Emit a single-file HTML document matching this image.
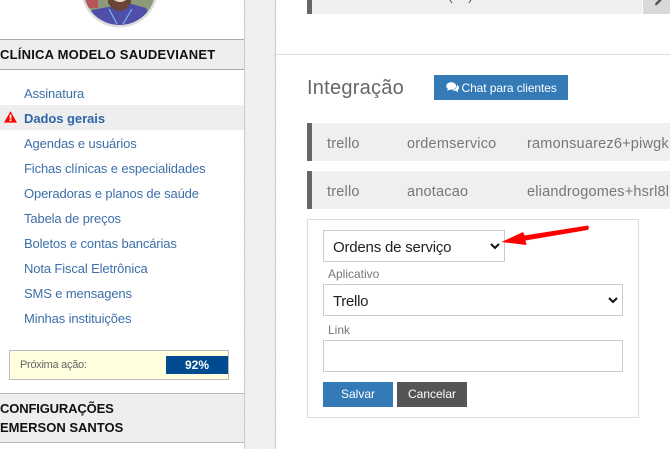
<!DOCTYPE html>
<html lang="pt">
<head>
<meta charset="utf-8">
<title>Integração</title>
<style>
html,body{margin:0;padding:0;background:#fff}
body{width:670px;height:449px;position:relative;overflow:hidden;font-family:"Liberation Sans",Arial,sans-serif}
.a{position:absolute}
.t{position:absolute;white-space:nowrap;line-height:20px;height:20px}
.m{left:24px;font-size:13px;color:#3d6fa8;letter-spacing:-.13px}
.r{font-size:14.5px;color:#777;letter-spacing:.2px}
.h{font-size:13px;font-weight:bold;color:#111}
</style>
</head>
<body>
<!-- texture strip -->
<div class="a" style="left:244px;top:0;width:32px;height:449px;box-sizing:border-box;border-left:1px solid #ccc;border-right:1px solid #ccc;background:repeating-linear-gradient(45deg,#f1f1f1 0 2px,#eeeeee 2px 4px)"></div>

<!-- avatar -->
<svg class="a" style="left:76px;top:0" width="88" height="30" viewBox="0 0 88 30">
<defs><clipPath id="c"><circle cx="43.5" cy="-11" r="36"/></clipPath></defs>
<circle cx="43.5" cy="-11" r="38.5" fill="#ddd"/>
<g clip-path="url(#c)">
<rect x="0" y="0" width="88" height="30" fill="#8f9a78"/>
<rect x="0" y="0" width="22" height="8" fill="#b5565a"/>
<path d="M8 28 L16 10 L32 7 L56 4 L70 8 L80 28 Z" fill="#4f4ea8"/>
<path d="M32 0 H55 V3 Q50 11 44 11 Q37 11 32 3 Z" fill="#6a4434"/>
<path d="M38 0 Q44 4 50 0 Z" fill="#e8d8cc"/>
<path d="M33 9 L41 24 M56 9 L47 24" stroke="#7cc0e6" stroke-width="1.1" fill="none"/>
</g>
</svg>

<!-- sidebar header -->
<div class="a" style="left:0;top:39px;width:244px;height:31px;box-sizing:border-box;background:#eee;border-top:1px solid #aaa;border-bottom:1px solid #aaa"></div>
<div class="t h" style="left:0;top:45px;letter-spacing:.22px">CLÍNICA MODELO SAUDEVIANET</div>

<!-- menu -->
<div class="a" style="left:0;top:105px;width:244px;height:25px;background:#eee"></div>
<svg class="a" style="left:4px;top:111px" width="13" height="12" viewBox="0 0 13 12">
<path d="M6.5 0.3 L12.9 11.6 H0.1 Z" fill="#f00"/>
<rect x="5.6" y="3.6" width="1.8" height="4" fill="#fff"/><rect x="5.6" y="8.4" width="1.8" height="1.8" fill="#fff"/>
</svg>
<div class="t m" style="top:84px">Assinatura</div>
<div class="t m" style="top:109px;font-weight:bold;color:#2e66a8;letter-spacing:-.05px">Dados gerais</div>
<div class="t m" style="top:134px">Agendas e usuários</div>
<div class="t m" style="top:159px">Fichas clínicas e especialidades</div>
<div class="t m" style="top:184px">Operadoras e planos de saúde</div>
<div class="t m" style="top:209px">Tabela de preços</div>
<div class="t m" style="top:234px">Boletos e contas bancárias</div>
<div class="t m" style="top:259px">Nota Fiscal Eletrônica</div>
<div class="t m" style="top:284px">SMS e mensagens</div>
<div class="t m" style="top:309px">Minhas instituições</div>

<!-- next action -->
<div class="a" style="left:9px;top:350px;width:220px;height:30px;box-sizing:border-box;background:#ffffe0;border:1px solid #bbb"></div>
<div class="t" style="left:20px;top:355px;font-size:11px;color:#666;letter-spacing:-.28px">Próxima ação:</div>
<div class="a" style="left:166px;top:356px;width:62px;height:18px;background:#004a8f"></div>
<div class="t" style="left:166px;top:356px;width:62px;height:18px;line-height:19px;text-align:center;font-size:12px;font-weight:bold;color:#fff">92%</div>

<!-- config -->
<div class="a" style="left:0;top:393px;width:244px;height:50px;box-sizing:border-box;background:#eee;border-top:1px solid #bbb;border-bottom:1px solid #bbb"></div>
<div class="t h" style="left:0;top:399px;letter-spacing:-.15px">CONFIGURAÇÕES</div>
<div class="t h" style="left:0;top:418px">EMERSON SANTOS</div>

<!-- top row -->
<div class="a" style="left:307px;top:0;width:335px;height:14px;background:#efefef"></div>
<div class="a" style="left:307px;top:0;width:5px;height:14px;background:#666"></div>
<div class="t" style="left:328px;top:-15px;font-size:14px;color:#777">Comercial</div>
<div class="t" style="left:448px;top:-15px;font-size:14px;color:#555">(41)</div>
<div class="a" style="left:643px;top:0;width:27px;height:14px;background:#d9d9d9"></div>
<svg class="a" style="left:654px;top:0" width="10" height="6" viewBox="0 0 10 6"><path d="M1 5.5 L1.5 3 L4.5 0 H8 L3 5 Z" fill="#555"/></svg>

<div class="a" style="left:276px;top:54px;width:394px;height:1px;background:#ddd"></div>

<!-- heading -->
<div class="t" style="left:307px;top:78px;font-size:20px;color:#666;letter-spacing:.25px">Integração</div>
<div class="a" style="left:434px;top:75px;width:134px;height:25px;background:#337ab7"></div>
<svg class="a" style="left:446px;top:82px" width="13" height="11" viewBox="0 0 13 11">
<ellipse cx="5.2" cy="4" rx="5" ry="3.8" fill="#fff"/><path d="M2 6.5 L1 9 L5 7 Z" fill="#fff"/>
<path d="M11 2.8 Q13 4 13 5.8 Q13 7.4 11.6 8.2 L12.4 10.4 L9.6 8.8 Q7.6 8.9 6.4 8 Q10.8 7.6 11 2.8 Z" fill="#fff"/>
</svg>
<div class="t" style="left:461.5px;top:78px;font-size:12px;color:#fff;letter-spacing:-.08px">Chat para clientes</div>

<!-- rows -->
<div class="a" style="left:307px;top:123px;width:363px;height:38px;background:#efefef"></div>
<div class="a" style="left:307px;top:123px;width:5px;height:38px;background:#666"></div>
<div class="t r" style="left:327px;top:134px">trello</div>
<div class="t r" style="left:407px;top:134px">ordemservico</div>
<div class="t r" style="left:527px;top:134px">ramonsuarez6+piwgk</div>

<div class="a" style="left:307px;top:171px;width:363px;height:38px;background:#efefef"></div>
<div class="a" style="left:307px;top:171px;width:5px;height:38px;background:#666"></div>
<div class="t r" style="left:327px;top:182px">trello</div>
<div class="t r" style="left:407px;top:182px">anotacao</div>
<div class="t r" style="left:527px;top:182px">eliandrogomes+hsrl8l</div>

<!-- form -->
<div class="a" style="left:307px;top:219px;width:332px;height:199px;box-sizing:border-box;border:1px solid #ddd;background:#fff"></div>
<div class="a" style="left:323px;top:230px;width:182px;height:32px;box-sizing:border-box;border:1px solid #ccc"></div>
<div class="t" style="left:333px;top:238px;font-size:15px;color:#222;letter-spacing:-.2px">Ordens de serviço</div>
<div class="t" style="left:328px;top:264px;font-size:12px;color:#777">Aplicativo</div>
<div class="a" style="left:323px;top:284px;width:300px;height:32px;box-sizing:border-box;border:1px solid #ccc"></div>
<div class="t" style="left:333px;top:292px;font-size:15px;color:#222;letter-spacing:-.3px">Trello</div>
<div class="t" style="left:328px;top:320px;font-size:12px;color:#777">Link</div>
<div class="a" style="left:323px;top:340px;width:300px;height:32px;box-sizing:border-box;border:1px solid #ccc"></div>
<div class="a" style="left:323px;top:382px;width:70px;height:25px;background:#337ab7;color:#fff;font-size:12px;line-height:25px;text-align:center">Salvar</div>
<div class="a" style="left:397px;top:382px;width:70px;height:25px;background:#555;color:#fff;font-size:12px;line-height:25px;text-align:center">Cancelar</div>

<!-- chevrons -->
<svg class="a" style="left:489px;top:242px" width="12" height="8" viewBox="0 0 12 8"><path d="M2 2 L6 6 L10 2" fill="none" stroke="#111" stroke-width="2"/></svg>
<svg class="a" style="left:607px;top:296px" width="12" height="8" viewBox="0 0 12 8"><path d="M2 2 L6 6 L10 2" fill="none" stroke="#111" stroke-width="2"/></svg>

<!-- arrow -->
<svg class="a" style="left:495px;top:220px" width="100" height="30" viewBox="0 0 100 30">
<path d="M6.5 22 L28 12 L29.5 15.5 L93 5.5 Q95 8.5 92.5 10 L30.5 20.5 L31.5 25 Z" fill="#f00"/>
</svg>
</body>
</html>
